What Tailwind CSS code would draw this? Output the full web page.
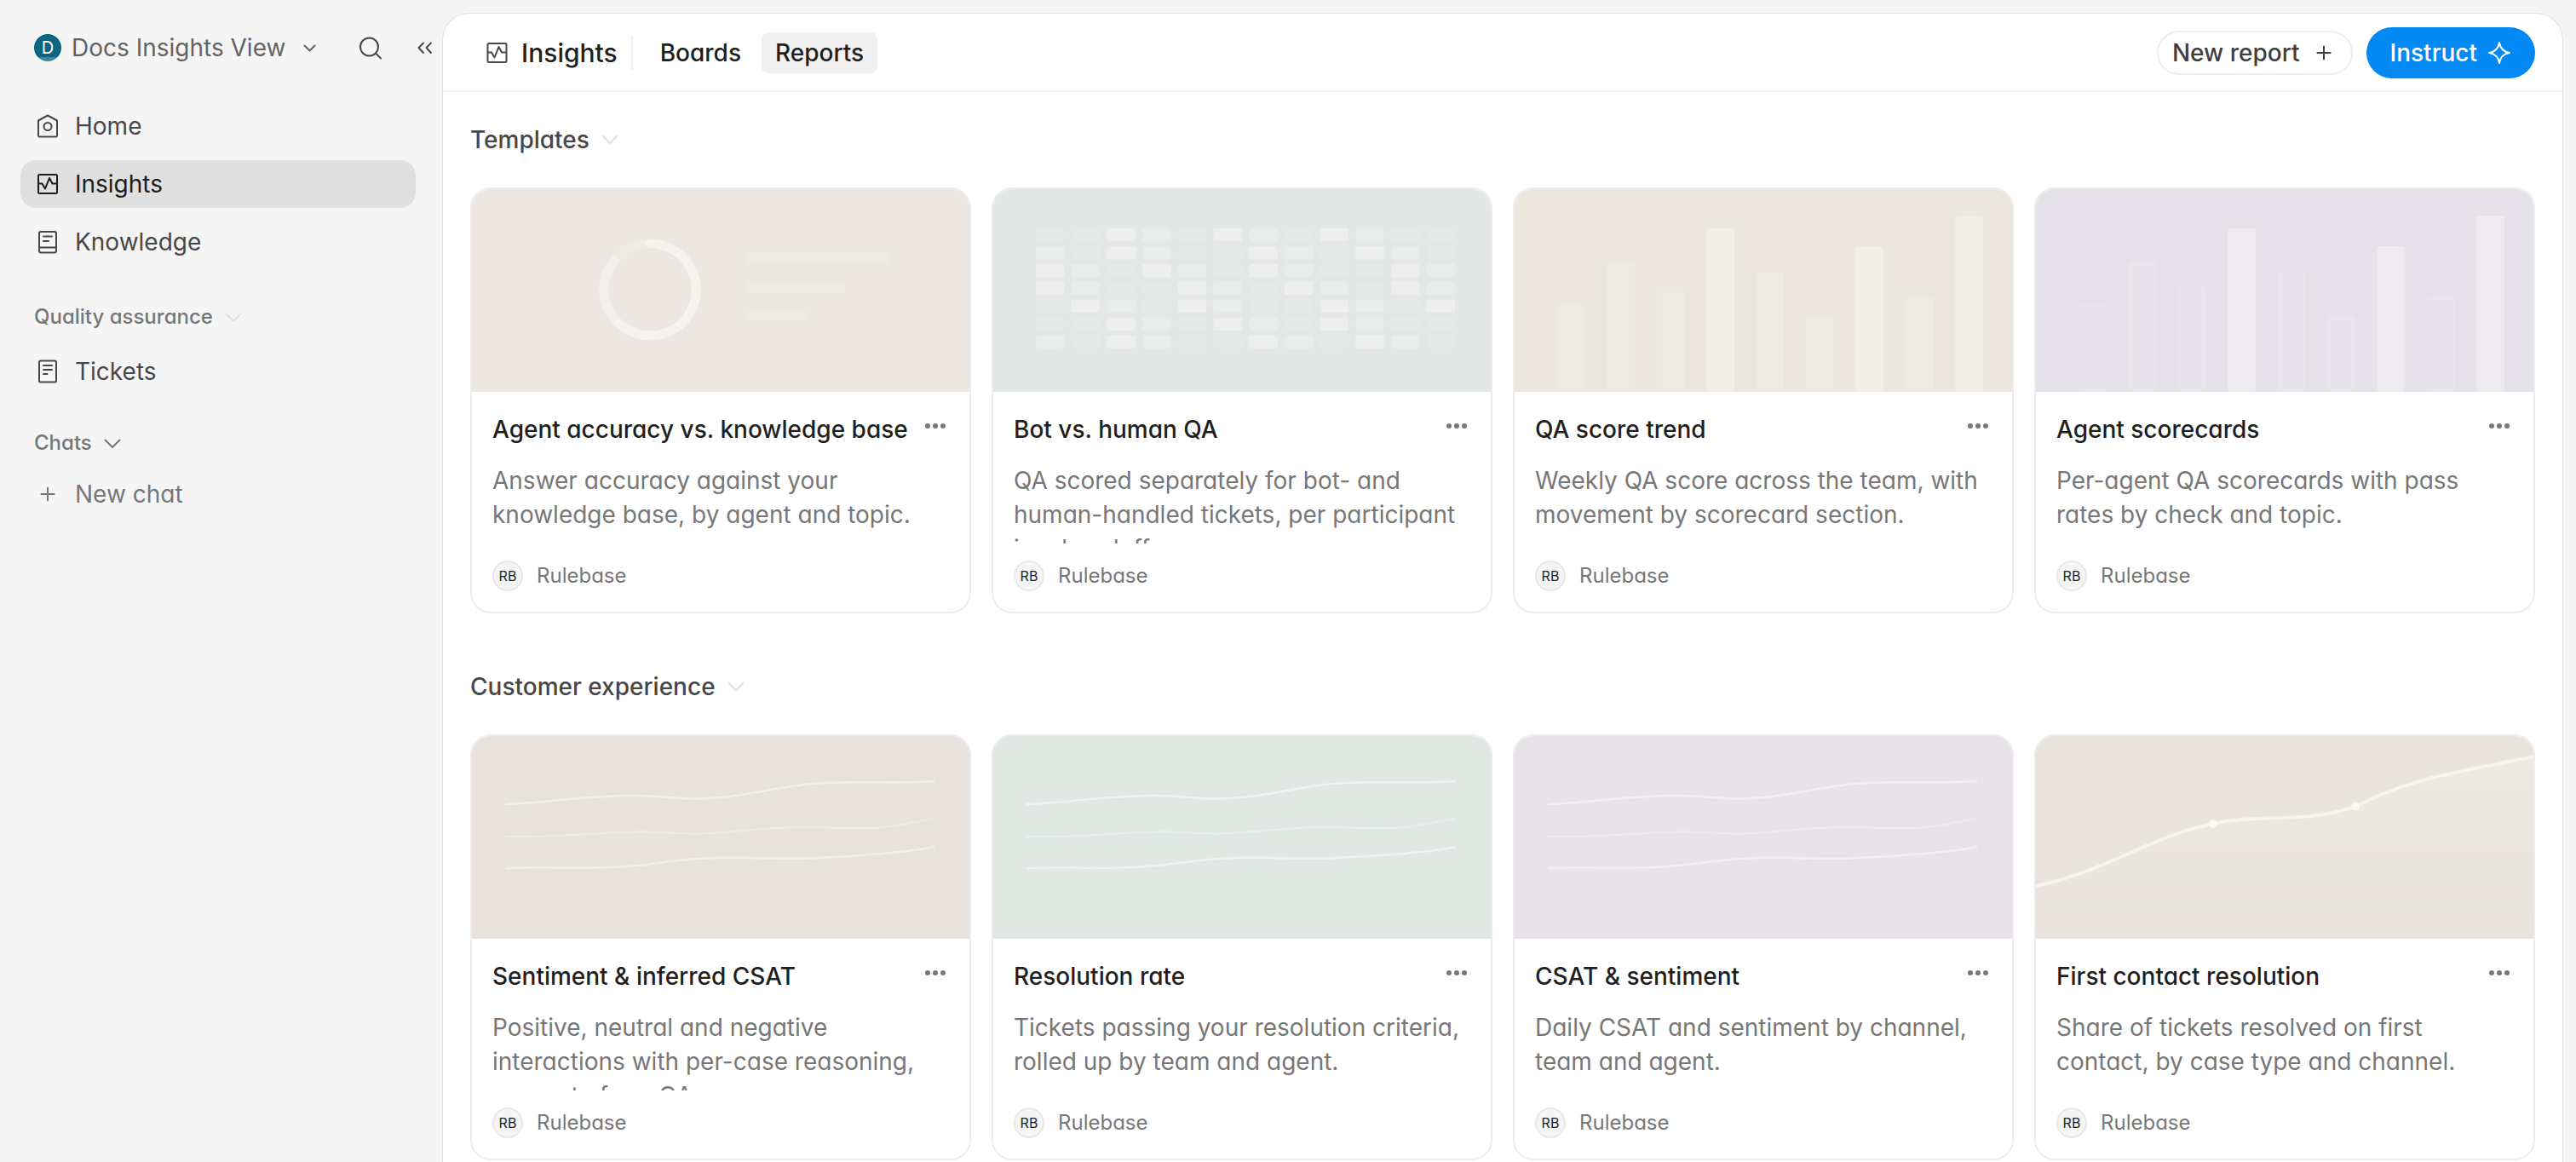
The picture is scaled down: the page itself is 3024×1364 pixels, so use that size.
<!DOCTYPE html>
<html lang="en">
<head>
  <meta charset="UTF-8" />
  <meta name="viewport" content="width=device-width, initial-scale=1" />
  <title>Insights - Reports</title>
  <script src="https://cdn.jsdelivr.net/npm/@tailwindcss/browser@4"></script>
  <style>
    body {
      font-family: Inter, "Liberation Sans", sans-serif;
      font-feature-settings: "cv11";
    }
  </style>
</head>
<body class="bg-[#f5f5f5] h-screen flex overflow-hidden text-[28px] leading-10 text-[#474747] antialiased">

  <!-- Sidebar -->
  <aside class="w-[519px] shrink-0 flex flex-col">
    <div class="flex items-center h-[112px] pl-10 pr-[10px]">
      <button class="flex items-center text-[#636363]">
        <span class="size-8 rounded-full bg-[linear-gradient(#0b6580_84%,#3f87a0_84%)] text-white text-xl leading-8 text-center">D</span>
        <span class="ml-3">Docs Insights View</span>
        <svg class="ml-5 size-4" viewBox="0 0 16 16" fill="none" stroke="currentColor" stroke-width="2" stroke-linecap="round" stroke-linejoin="round"><path d="M2.500 5.500l6 6 6-6" /></svg>
      </button>
      <button class="ml-auto" aria-label="Search">
        <svg class="size-7" viewBox="0 0 28 28" fill="none" stroke="currentColor" stroke-width="2" stroke-linecap="round"><circle cx="12.5" cy="13" r="10.5" /><path d="M20 20.5l6 6" /></svg>
      </button>
      <button class="ml-10" aria-label="Collapse sidebar">
        <svg class="size-5" viewBox="0 0 20 20" fill="none" stroke="currentColor" stroke-width="2" stroke-linecap="round" stroke-linejoin="round"><path d="M8 4.5L2.5 10 8 16M17 4.5L11.500 10 17 16" /></svg>
      </button>
    </div>

    <nav class="px-6 mt-2 mr-[7px]">
      <div class="flex flex-col gap-3">
        <a href="#home" class="flex items-center gap-[18px] h-14 pl-[18px] rounded-[18px]">
          <svg class="size-7" viewBox="0 0 28 28" fill="none" stroke="currentColor" stroke-width="2" stroke-linejoin="round"><path d="M3 7.500L14 1.500l11 6v17.500a1.500 1.500 0 0 1-1.500 1.500h-19A1.500 1.500 0 0 1 3 25z" /><circle cx="14" cy="14.500" r="4.500" /></svg>
          Home
        </a>
        <a href="#insights" class="flex items-center gap-[18px] h-14 pl-[18px] rounded-[18px] bg-[#dfdfdf] text-[#1c1c1c]">
          <svg class="size-7" viewBox="0 0 28 28" fill="none" stroke="currentColor" stroke-width="2" stroke-linejoin="round"><rect x="3" y="3" width="22" height="22" rx="1.500" /><path d="M3 13.500h4.500l3.500 6 5-12.500 3.500 6.500H25" /></svg>
          Insights
        </a>
        <a href="#knowledge" class="flex items-center gap-[18px] h-14 pl-[18px] rounded-[18px]">
          <svg class="size-7" viewBox="0 0 28 28" fill="none" stroke="currentColor" stroke-width="2" stroke-linecap="round"><rect x="4" y="2" width="20" height="24.500" rx="2" /><path d="M9 7.500h10M9 13h6M4 20.500h20" /></svg>
          Knowledge
        </a>
      </div>

      <button class="flex items-center gap-[14px] mt-10 ml-4 h-10 text-2xl font-medium text-[#777777]">
        Quality assurance
        <svg class="size-5 text-[#e0e0e0]" viewBox="0 0 20 20" fill="none" stroke="currentColor" stroke-width="2" stroke-linecap="round" stroke-linejoin="round"><path d="M1.500 6.500l8.500 8.500 8.500-8.500" /></svg>
      </button>
      <a href="#tickets" class="flex items-center gap-[18px] h-14 mt-4 pl-[18px]">
        <svg class="size-7" viewBox="0 0 28 28" fill="none" stroke="currentColor" stroke-width="2" stroke-linecap="round"><rect x="4" y="1.500" width="20" height="25" rx="1.500" /><path d="M9 7h10M9 12h10M9 17h4.500" /></svg>
        Tickets
      </a>

      <button class="flex items-center gap-[14px] mt-9 ml-4 h-10 text-2xl font-medium text-[#777777]">
        Chats
        <svg class="size-5" viewBox="0 0 20 20" fill="none" stroke="currentColor" stroke-width="2" stroke-linecap="round" stroke-linejoin="round"><path d="M1.500 6.500l8.500 8.500 8.500-8.500" /></svg>
      </button>
      <button class="flex items-center gap-[18px] h-14 mt-3 pl-[18px] text-[#777777]">
        <svg class="size-7" viewBox="0 0 28 28" fill="none" stroke="currentColor" stroke-width="2" stroke-linecap="round"><path d="M14 6.500v15M6.500 14h15" /></svg>
        New chat
      </button>
    </nav>
  </aside>

  <!-- Main panel -->
  <main class="flex-1 min-w-0 mt-[15px] mr-[15px] bg-white border border-b-0 border-[#dedede] rounded-t-[32px] overflow-hidden">
    <header class="flex items-center h-[92px] pt-[2px] pl-[50px] pr-8 border-b-2 border-[#f3f3f3] font-medium text-[#1f1f1f]">
      <h1 class="flex items-center gap-[14px] text-[30px]">
        <svg class="size-7 text-[#474747]" viewBox="0 0 28 28" fill="none" stroke="currentColor" stroke-width="2" stroke-linejoin="round"><rect x="2.500" y="3" width="22" height="22" rx="1.500" /><path d="M2.500 13.500H7l3.500 6 5-12.500 3.500 6.500h5.500" /></svg>
        Insights
      </h1>
      <div class="w-[2px] h-10 ml-4 bg-[#f1f1f1]"></div>
      <nav class="flex gap-2 ml-4">
        <a href="#boards" class="h-12 px-4 leading-[48px] rounded-lg">Boards</a>
        <a href="#reports" class="h-12 px-4 leading-[48px] rounded-lg bg-[#f1f1f1]">Reports</a>
      </nav>
      <button class="flex items-center gap-4 ml-auto h-[52px] pl-4 pr-5 border-2 border-[#eeeeee] rounded-full text-[#3f3f3f]">
        New report
        <svg class="size-6" viewBox="0 0 24 24" fill="none" stroke="currentColor" stroke-width="2" stroke-linecap="round"><path d="M12 4.500v15M4.500 12h15" /></svg>
      </button>
      <button class="flex items-center gap-3 ml-4 h-[60px] px-7 rounded-full bg-[#0389f3] text-white">
        Instruct
        <svg class="size-7" viewBox="0 0 28 28" fill="none" stroke="currentColor" stroke-width="2" stroke-linejoin="round"><path d="M14 2Q15.600 12.400 26 14Q15.600 15.600 14 26Q12.400 15.600 2 14Q12.400 12.400 14 2z" /></svg>
      </button>
    </header>

    <section class="px-8 pt-10">
      <h2>
        <button class="flex items-center gap-[14px] h-8 font-medium">
          Templates
          <svg class="size-5 text-[#e0e0e0]" viewBox="0 0 20 20" fill="none" stroke="currentColor" stroke-width="2" stroke-linecap="round" stroke-linejoin="round"><path d="M1.500 5.500l8.500 9 8.500-9" /></svg>
        </button>
      </h2>
      <div id="templates" class="grid grid-cols-4 gap-6 mt-10"></div>
    </section>

    <section class="px-8 pt-[70px]">
      <h2>
        <button class="flex items-center gap-[14px] h-8 font-medium">
          Customer experience
          <svg class="size-5 text-[#e0e0e0]" viewBox="0 0 20 20" fill="none" stroke="currentColor" stroke-width="2" stroke-linecap="round" stroke-linejoin="round"><path d="M1.500 5.500l8.500 9 8.500-9" /></svg>
        </button>
      </h2>
      <div id="customerExperience" class="grid grid-cols-4 gap-6 mt-10"></div>
    </section>
  </main>

  <script>
    // Thumbnail drawings, all on a 584 x 238 canvas
    function donutArt() {
      return `
        <g fill="none" stroke="#fff" stroke-width="11">
          <circle cx="209" cy="118" r="54" stroke-opacity=".15" />
          <path d="M171 157A54 54 0 0 1 170 81" stroke-opacity=".28" />
          <path d="M209 64A54 54 0 1 1 173 158" stroke-opacity=".42" stroke-linecap="round" />
        </g>
        <g fill="#f1edea" fill-opacity=".55">
          <rect x="323" y="75" width="166" height="12" rx="4" />
          <rect x="323" y="109" width="114" height="12" rx="4" />
          <rect x="323" y="142" width="71" height="12" rx="4" />
        </g>`;
    }

    function heatmapArt() {
      const rows = [
        '002102102100',
        '102100210210',
        '210210210021',
        '210021021021',
        '021021002102',
        '002102102100',
        '102100210210'
      ];
      const fills = ['#e5e9e7', '#e8ecea', '#edeeed'];
      let out = '';
      rows.forEach((row, r) => {
        row.split('').forEach((level, c) => {
          out += `<rect x="${50 + c * 41.7}" y="${46 + r * 20.9}" width="33.500" height="15.500" rx="2" fill="${fills[level]}" />`;
        });
      });
      return out;
    }

    function barsArt() {
      const tops = [135, 85, 115, 46, 97, 149, 67, 126, 31];
      return tops.map((top, i) => {
        const opacity = top < 70 ? 0.34 : 0.14;
        return `<rect x="${50 + i * 58.4}" y="${top}" width="33" height="${238 - top}" rx="4" fill="#fff" fill-opacity="${opacity}" />`;
      }).join('');
    }

    function linesArt() {
      return `
        <g fill="none" stroke="#fff" stroke-width="2.500" stroke-linecap="round">
          <path d="M40 80C90 78 130 70 190 70C225 70 235 73.500 262 73.500C320 73.500 360 57 414 55C470 53 505 56 542 53" stroke-opacity=".5" />
          <path d="M40 118C100 120 150 112 202 112.500C230 113 238 114.500 262 114.500C300 114 340 107 390 107C425 107 440 109 470 108C500 107 520 100 542 97" stroke-opacity=".25" />
          <path d="M40 155.500C80 153 110 156 150 154.500C215 153 235 144 285 143C325 142 350 144.500 394 143.500C450 141 500 138 542 130.500" stroke-opacity=".5" />
        </g>`;
    }

    function trendArt() {
      return `
        <defs>
          <linearGradient id="trendFill" x1="0" y1="0" x2="0" y2="1">
            <stop offset="0" stop-color="#fff" stop-opacity=".2" />
            <stop offset="1" stop-color="#fff" stop-opacity="0" />
          </linearGradient>
        </defs>
        <path d="M0 176C80 160 140 115 208 103C255 91 320 103 375 82.500C440 50 480 45 584 24V238H0z" fill="url(#trendFill)" />
        <path d="M0 176C80 160 140 115 208 103C255 91 320 103 375 82.500C440 50 480 45 584 24" fill="none" stroke="#fff" stroke-opacity=".55" stroke-width="4" />
        <circle cx="208" cy="103" r="5" fill="#fff" fill-opacity=".7" />
        <circle cx="375" cy="82.500" r="5" fill="#fff" fill-opacity=".7" />`;
    }

    const templates = [
      { title: 'Agent accuracy vs. knowledge base', text: 'Answer accuracy against your knowledge base, by agent and topic.', bg: 'bg-[#ece7e1]', art: donutArt },
      { title: 'Bot vs. human QA', text: 'QA scored separately for bot- and human-handled tickets, per participant in a handoff.', bg: 'bg-[#e3e7e5]', art: heatmapArt },
      { title: 'QA score trend', text: 'Weekly QA score across the team, with movement by scorecard section.', bg: 'bg-[#ebe7dd]', art: barsArt },
      { title: 'Agent scorecards', text: 'Per-agent QA scorecards with pass rates by check and topic.', bg: 'bg-[#e4e1e8]', art: barsArt }
    ];

    const customerExperience = [
      { title: 'Sentiment & inferred CSAT', text: 'Positive, neutral and negative interactions with per-case reasoning, separate from QA.', bg: 'bg-[#e7e3dc]', art: linesArt },
      { title: 'Resolution rate', text: 'Tickets passing your resolution criteria, rolled up by team and agent.', bg: 'bg-[#e1e8e4]', art: linesArt },
      { title: 'CSAT & sentiment', text: 'Daily CSAT and sentiment by channel, team and agent.', bg: 'bg-[#e8e3e9]', art: linesArt },
      { title: 'First contact resolution', text: 'Share of tickets resolved on first contact, by case type and channel.', bg: 'bg-[#e8e4db]', art: trendArt }
    ];

    function renderCards(id, cards) {
      document.getElementById(id).innerHTML = cards.map(card => `
        <article class="border-2 border-[#ededed] rounded-3xl overflow-hidden">
          <div class="h-[238px] ${card.bg}">
            <svg class="block size-full" viewBox="0 0 584 238" preserveAspectRatio="none">${card.art()}</svg>
          </div>
          <div class="p-6">
            <div class="flex items-start justify-between">
              <h3 class="leading-10 font-medium text-[#1f1f1f] whitespace-nowrap"><a href="#report">${card.title.replace('&', '&amp;')}</a></h3>
              <button class="h-8 pr-1 text-[#777777]" aria-label="More options">
                <svg class="w-6 h-2" viewBox="0 0 24 8" fill="currentColor"><circle cx="3" cy="4" r="3" /><circle cx="12" cy="4" r="3" /><circle cx="21" cy="4" r="3" /></svg>
              </button>
            </div>
            <p class="h-[94px] mt-5 overflow-hidden text-[#777777]">${card.text}</p>
            <div class="flex items-center gap-4 mt-5 h-9 text-2xl text-[#777777]">
              <span class="size-9 rounded-full border-2 border-[#e8e8e8] bg-[#f5f5f5] text-base leading-8 text-center text-[#1f1f1f]">RB</span>
              Rulebase
            </div>
          </div>
        </article>
      `).join('');
    }

    renderCards('templates', templates);
    renderCards('customerExperience', customerExperience);
  </script>
</body>
</html>
